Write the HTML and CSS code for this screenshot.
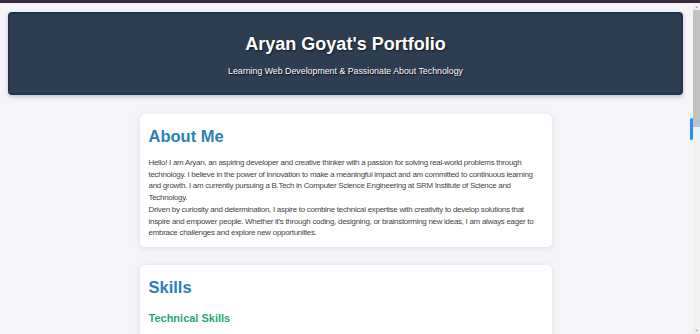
FILE: index.html
```html
<!DOCTYPE html>
<html lang="en">
<head>
  <meta charset="UTF-8" />
  <meta name="viewport" content="width=device-width, initial-scale=1.0" />
  <title>Aryan Goyat's Portfolio</title>
  <link rel="stylesheet" href="styles.css">
</head>
<body>
  <div class="topline"></div>
  <div class="window">
    <div class="page">
      <header class="hero">
        <h1>Aryan Goyat's Portfolio</h1>
        <p>Learning Web Development &amp; Passionate About Technology</p>
      </header>

      <main class="content">
        <section class="card">
          <h2>About Me</h2>
          <p>Hello! I am Aryan, an aspiring developer and creative thinker with a passion for solving real-world problems through technology. I believe in the power of innovation to make a meaningful impact and am committed to continuous learning and growth. I am currently pursuing a B.Tech in Computer Science Engineering at SRM Institute of Science and Technology.<br>
          Driven by curiosity and determination, I aspire to combine technical expertise with creativity to develop solutions that inspire and empower people. Whether it's through coding, designing, or brainstorming new ideas, I am always eager to embrace challenges and explore new opportunities.</p>
        </section>

        <section class="card">
          <h2>Skills</h2>
          <h3>Technical Skills</h3>
        </section>
      </main>
    </div>

    <div class="scrollbar">
      <div class="arrow">&#9650;</div>
      <div class="thumb"></div>
      <div class="track"></div>
      <div class="arrow">&#9660;</div>
    </div>
  </div>

  <div class="scroll-marker"></div>
</body>
</html>
```

FILE: styles.css
```css
body {
  margin: 0;
  font-family: "Liberation Sans", Arial, sans-serif;
  height: 334px;
  overflow: hidden;
  display: flex;
  flex-direction: column;
  background: #f6f4f8;
}

.topline {
  height: 3px;
  background: #3b2a3f;
  flex-shrink: 0;
}

.window {
  flex: 1;
  display: flex;
  overflow: hidden;
}

.page {
  flex: 1;
  padding: 9px 10px 0 8px;
  overflow: hidden;
}

.hero {
  height: 79px;
  background: #2c3e50;
  border: 2px solid #1b3850;
  border-radius: 4px;
  box-shadow: 0 2px 4px rgba(0, 0, 0, 0.2);
  color: white;
  text-align: center;
  display: flex;
  flex-direction: column;
  justify-content: center;
}

.hero h1 {
  margin: 2px 0 0;
  font-size: 18px;
  text-shadow: 1px 1px 2px rgba(0, 0, 0, 0.6);
}

.hero p {
  margin: 11px 0 0;
  font-size: 8.8px;
  text-shadow: 1px 1px 1px rgba(0, 0, 0, 0.9);
}

.content {
  width: 412px;
  margin: 19px auto 0;
  display: flex;
  flex-direction: column;
  gap: 18px;
}

.card {
  background: white;
  border-radius: 5px;
  box-shadow: 0 1px 6px rgba(0, 0, 0, 0.09);
  padding: 13px 10px 8px 9px;
}

.card h2 {
  margin: 0;
  font-size: 16.5px;
  color: #2980b9;
}

.card p {
  margin: 11px 0 0;
  font-size: 7.95px;
  letter-spacing: -0.27px;
  line-height: 11.7px;
  color: #444;
}

.card h3 {
  margin: 15px 0 12px;
  font-size: 11px;
  color: #1fa971;
}

.scrollbar {
  width: 7px;
  flex-shrink: 0;
  background: #f1f1f1;
  display: flex;
  flex-direction: column;
}

.scrollbar .arrow {
  height: 7px;
  font-size: 4px;
  line-height: 7px;
  text-align: center;
  color: #a3a3a3;
}

.scrollbar .thumb {
  height: 117px;
  background: #c1c1c1;
}

.scrollbar .track {
  flex: 1;
}

.scroll-marker {
  position: fixed;
  top: 118px;
  left: 690px;
  width: 3px;
  height: 22px;
  background: #1e90ff;
  border-radius: 2px;
}
```
